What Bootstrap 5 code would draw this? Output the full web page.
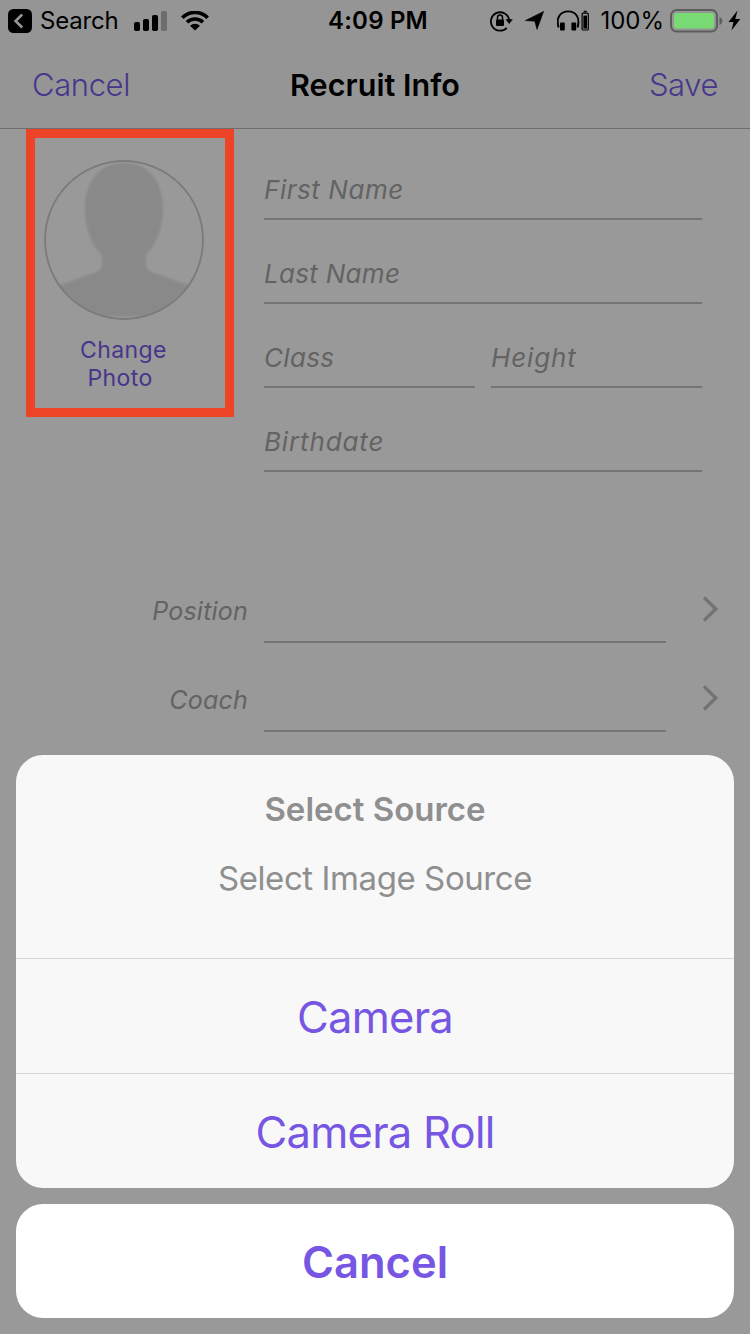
<!DOCTYPE html>
<html lang="en">
<head>
<meta charset="utf-8">
<meta name="viewport" content="width=device-width, initial-scale=1">
<title>Recruit Info</title>
<link rel="stylesheet" href="https://cdn.jsdelivr.net/npm/bootstrap@5.3.0/dist/css/bootstrap.min.css">
<style>
  body { background: #999; font-family: Inter, "Liberation Sans", sans-serif; color: #000; height: 1334px; line-height: 1; }
  svg { display: block; flex: none; }
  .topbar { background: #959595; border-bottom: 1px solid #6e6e6e; height: 129px; }
  .statusbar { height: 41px; font-size: 24px; line-height: 41px; }
  .statusbar .clock { font-size: 24px; font-weight: 600; letter-spacing: .2px; margin-left: 6px; }
  .search-label { letter-spacing: -.2px; }
  .side { flex: 1 1 0; }
  .titlebar { height: 88px; line-height: 88px; padding: 0 32px; }
  .titlebar a { font-size: 31px; font-weight: 300; color: #48358c; flex: 1 1 0; letter-spacing: -.4px; }
  .titlebar h1 { font-size: 30.5px; font-weight: 600; line-height: 88px; letter-spacing: .05px; }
  .photo-box { width: 208px; height: 288px; margin-left: 25.5px; border: 9px solid #ed4327; padding-top: 22px; }
  .photo-box svg { margin-left: 9.5px; }
  .photo-box a { font-size: 23px; line-height: 28px; letter-spacing: .4px; color: #48358c; margin: 16px 12px 0 0; }
  .photo-word { padding-right: 7px; }
  .fields { margin: 7px 48px 0 30.5px; }
  .field { height: 84px; border-bottom: 2px solid #757575; font-size: 26px; font-style: italic; color: #636363; line-height: 54px; padding-top: 27px; letter-spacing: .55px; }
  .field.tight { letter-spacing: .3px; }
  .field.wide { letter-spacing: .85px; }
  .picks { margin-top: 82px; }
  .pick { height: 89px; padding-right: 31px; }
  .pick label { width: 264px; padding: 24px 16px 0 0; text-align: right; font-style: italic; font-size: 25px; color: #636363; line-height: 26px; letter-spacing: .2px; }
  .pick .slot { width: 402px; height: 89px; border-bottom: 2px solid #757575; }
  .pick svg { margin-top: 20px; }
  .sheets { padding: 0 16px 16px; gap: 16px; }
  .sheet { background: #f8f8f8; border-radius: 27px; overflow: hidden; color: #8f8f8f; text-align: center; }
  .sheet-head { height: 203px; padding-top: 34px; }
  .sheet-head h2 { font-size: 33px; line-height: 40px; font-weight: 600; margin: 0 0 29px; }
  .sheet-head p { font-size: 33px; line-height: 40px; margin: 0; letter-spacing: -.42px; }
  .action { height: 115px; line-height: 117px; border-top: 1px solid #d6d6d8; font-size: 43.5px; color: #7656e3; letter-spacing: -.75px; }
  .dismiss { background: #fff; height: 114px; line-height: 116px; font-size: 43.5px; font-weight: 600; color: #7656e3; }
</style>
</head>
<body class="position-relative overflow-hidden">
<header class="topbar">
  <div class="statusbar d-flex align-items-center">
    <div class="side d-flex align-items-center ps-2">
      <svg width="24" height="24" viewBox="0 0 24 24"><rect width="24" height="24" rx="5.5"/><path d="M14.2 5.500 7.600 12l6.600 6.500" fill="none" stroke="#959595" stroke-width="2.6"/></svg>
      <span class="ms-2 search-label">Search</span>
      <svg class="ms-3" width="34" height="20" viewBox="0 0 34 20"><rect x="0" y="11" width="6" height="9" rx="1.8"/><rect x="9" y="8" width="6" height="12" rx="1.8"/><rect x="18" y="4" width="6" height="16" rx="1.8"/><rect x="27" y="0" width="6" height="20" rx="1.8" fill="#6d6d6d"/></svg>
      <svg style="margin-left:13px" width="28" height="20" viewBox="0 0 28 20"><path d="M1.300 6.700a18 18 0 0 1 25.400 0M6 11.300a11.500 11.500 0 0 1 16 0" fill="none" stroke="#000" stroke-width="3.600"/><path d="M9 14.800a7 7 0 0 1 10 0L14 19.600z"/></svg>
    </div>
    <div class="clock">4:09 PM</div>
    <div class="side d-flex align-items-center justify-content-end pe-2">
      <svg width="23" height="22" viewBox="0 0 23 22"><path d="M16.800 17.800A9.200 9.200 0 1 1 19.200 10" fill="none" stroke="#000" stroke-width="1.8"/><path d="M15.500 9.300h7.300L19.200 14z"/><rect x="6" y="9.500" width="8" height="6.500" rx="1"/><path d="M7.500 10V7.600a2.500 2.500 0 0 1 5 0V10" fill="none" stroke="#000" stroke-width="1.5"/></svg>
      <svg style="margin-left:12px" width="19" height="19" viewBox="0 0 19 19"><path d="M18.600.4 12 18.400 9.800 10.200.4 9.600z" stroke="#000" stroke-width=".6" stroke-linejoin="round"/></svg>
      <svg style="margin-left:13px" width="33" height="21" viewBox="0 0 33 21"><path d="M1.600 17.500C-1.500 7 4 1.400 11.200 1.400S23.500 7 20.600 17.500" fill="none" stroke="#000" stroke-width="1.900"/><rect x="3" y="12.500" width="4.800" height="8" rx="1"/><rect x="14.400" y="12.500" width="4.800" height="8" rx="1"/><rect x="25.100" y="3.200" width="6.200" height="16.800" rx="1" fill="none" stroke="#000" stroke-width="1.200"/><rect x="26.400" y="5.600" width="3.600" height="13"/><rect x="26.700" y=".8" width="3" height="1.500"/></svg>
      <span style="margin-left:10px">100%</span>
      <svg style="margin-left:6px" width="72" height="24" viewBox="0 0 72 24"><rect x="1" y="1" width="46" height="21.500" rx="5.500" fill="none" stroke="#5c5c5c" stroke-width="2"/><rect x="4" y="4" width="40" height="15.500" rx="2" fill="#78da72"/><path d="M49.500 8c3.800 1.500 3.800 6.500 0 8z" fill="#5c5c5c"/><path d="M67.500 1.500 58.500 13h5l-2 8.500L70.300 10h-5z"/></svg>
    </div>
  </div>
  <nav class="titlebar d-flex">
    <a class="text-decoration-none text-start">Cancel</a>
    <h1 class="m-0">Recruit Info</h1>
    <a class="text-decoration-none text-end">Save</a>
  </nav>
</header>
<main>
  <section class="d-flex align-items-start">
    <div class="photo-box">
      <svg width="160" height="160" viewBox="0 0 160 160">
        <defs><clipPath id="face"><circle cx="80" cy="80" r="79"/></clipPath><filter id="soft"><feGaussianBlur stdDeviation=".8"/></filter></defs>
        <g clip-path="url(#face)"><path filter="url(#soft)" fill="#898989" d="M80 3c-25 0-39 18-39 46 0 20 7 37 17 46v9c0 4-2 6-6 8l-36 13v31.500h128V125l-36-13c-4-2-6-4-6-8v-9c9-9 17-26 17-46C119 21 105 3 80 3z"/></g>
        <circle cx="80" cy="80" r="79" fill="none" stroke="#7b7b7b" stroke-width="1.800"/>
      </svg>
      <a class="d-block text-center text-decoration-none">Change<br><span class="photo-word">Photo</span></a>
    </div>
    <div class="fields flex-grow-1">
      <div class="field">First Name</div>
      <div class="field tight">Last Name</div>
      <div class="d-flex gap-3"><div class="field tight w-50">Class</div><div class="field wide w-50">Height</div></div>
      <div class="field wide">Birthdate</div>
    </div>
  </section>
  <section class="picks">
    <div class="pick d-flex align-items-center justify-content-between"><label>Position</label><span class="slot me-auto"></span><svg width="17" height="26" viewBox="0 0 17 26"><path d="M2 1.500 13.800 13 2 24.500" fill="none" stroke="#737376" stroke-width="3.300"/></svg></div>
    <div class="pick d-flex align-items-center justify-content-between"><label>Coach</label><span class="slot me-auto"></span><svg width="17" height="26" viewBox="0 0 17 26"><path d="M2 1.500 13.800 13 2 24.500" fill="none" stroke="#737376" stroke-width="3.300"/></svg></div>
  </section>
</main>
<div class="sheets position-absolute bottom-0 start-0 w-100 d-flex flex-column">
  <div class="sheet">
    <div class="sheet-head"><h2>Select Source</h2><p>Select Image Source</p></div>
    <div class="action">Camera</div>
    <div class="action">Camera Roll</div>
  </div>
  <div class="sheet dismiss">Cancel</div>
</div>
<script src="https://cdn.jsdelivr.net/npm/bootstrap@5.3.0/dist/js/bootstrap.bundle.min.js"></script>
</body>
</html>
